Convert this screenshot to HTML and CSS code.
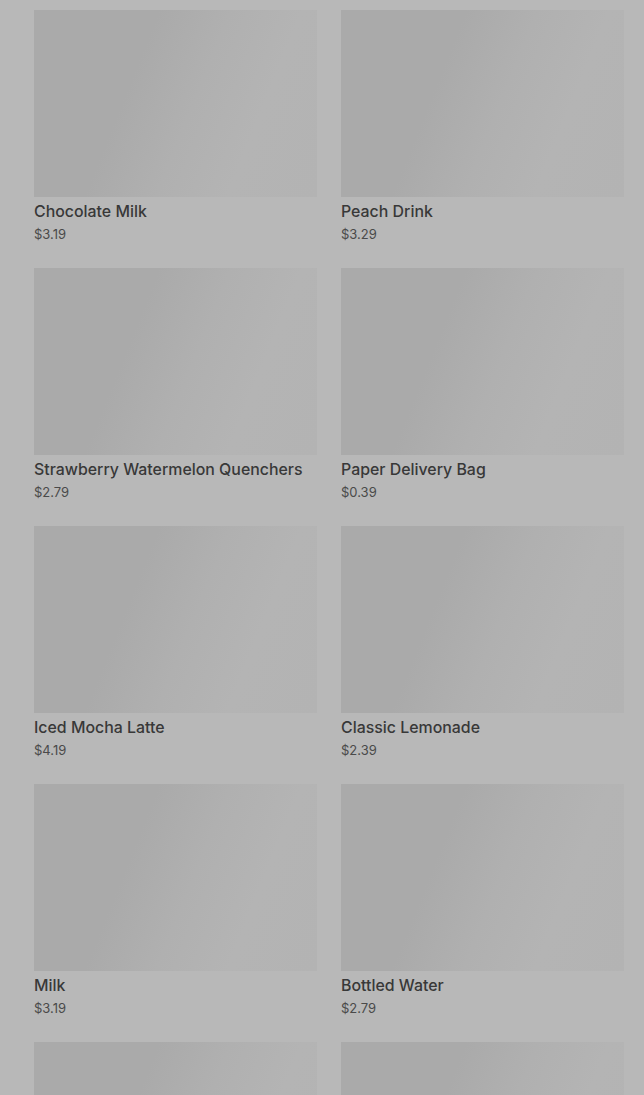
FILE: index.html
```html
<!DOCTYPE html>
<html lang="en">
<head>
    <meta charset="UTF-8">
    <meta name="viewport" content="width=device-width, initial-scale=1.0">
    <title>Drinks</title>
    <link rel="stylesheet" href="styles.css">
</head>
<body>
    <main class="menu">
        <div class="grid">
            <a class="item" href="#">
                <div class="thumb"></div>
                <div class="name">Chocolate Milk</div>
                <div class="price">$3.19</div>
            </a>
            <a class="item" href="#">
                <div class="thumb"></div>
                <div class="name">Peach Drink</div>
                <div class="price">$3.29</div>
            </a>
            <a class="item" href="#">
                <div class="thumb"></div>
                <div class="name">Strawberry Watermelon Quenchers</div>
                <div class="price">$2.79</div>
            </a>
            <a class="item" href="#">
                <div class="thumb"></div>
                <div class="name">Paper Delivery Bag</div>
                <div class="price">$0.39</div>
            </a>
            <a class="item" href="#">
                <div class="thumb"></div>
                <div class="name">Iced Mocha Latte</div>
                <div class="price">$4.19</div>
            </a>
            <a class="item" href="#">
                <div class="thumb"></div>
                <div class="name">Classic Lemonade</div>
                <div class="price">$2.39</div>
            </a>
            <a class="item" href="#">
                <div class="thumb"></div>
                <div class="name">Milk</div>
                <div class="price">$3.19</div>
            </a>
            <a class="item" href="#">
                <div class="thumb"></div>
                <div class="name">Bottled Water</div>
                <div class="price">$2.79</div>
            </a>
            <!-- next row still loading -->
            <div class="item">
                <div class="thumb"></div>
            </div>
            <div class="item">
                <div class="thumb"></div>
            </div>
        </div>
    </main>
</body>
</html>
```

FILE: styles.css
```css
body {
    font-family: 'Inter', 'Liberation Sans', sans-serif;
    margin: 0;
    padding: 0;
    background: #b8b8b8;
    color: #353535;
    overflow: hidden;
}

/* Menu grid */
.menu {
    padding: 10px 20px 0 34px;
}

.grid {
    display: grid;
    grid-template-columns: 1fr 1fr;
    column-gap: 24px;
    row-gap: 25px;
}

.item {
    display: block;
    color: inherit;
    text-decoration: none;
}

/* Placeholder picture while loading */
.thumb {
    height: 187px;
    background: linear-gradient(112deg, #aaaaaa 0%, #aaaaaa 35%, #b0b0b0 55%, #b4b4b4 75%, #b3b3b3 100%);
}

.name {
    margin-top: 5px;
    font-size: 15.9px;
    line-height: 19px;
    font-weight: 500;
    color: #383838;
}

.price {
    margin-top: 4px;
    font-size: 13px;
    line-height: 18px;
    color: #4a4a4a;
}
```
